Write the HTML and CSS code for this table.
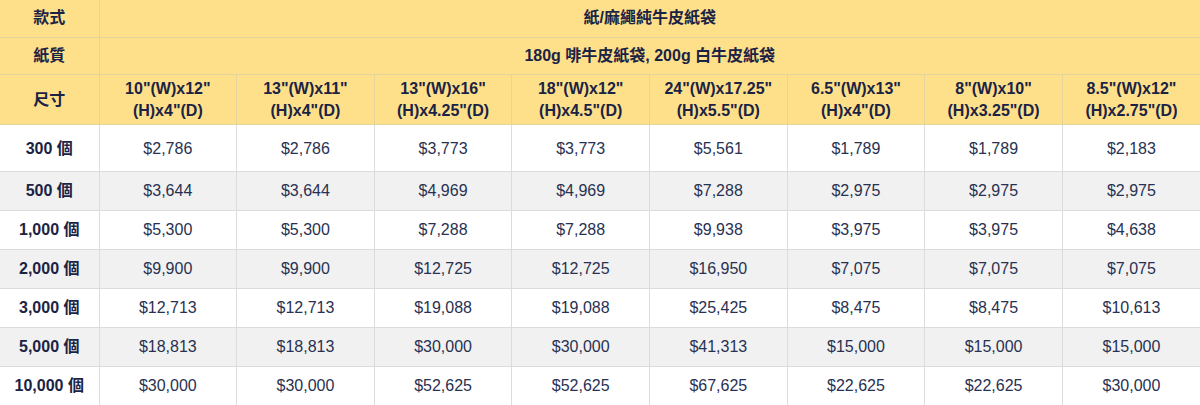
FILE: index.html
```html
<!DOCTYPE html>
<html lang="zh-Hant">
<head>
<meta charset="utf-8">
<link rel="stylesheet" href="styles.css">
</head>
<body>
<table class="price">
  <colgroup>
    <col class="c-label">
    <col span="8" class="c-size">
  </colgroup>
  <thead>
    <tr class="h-row">
      <th>款式</th>
      <th colspan="8">紙/麻繩純牛皮紙袋</th>
    </tr>
    <tr class="h-row">
      <th>紙質</th>
      <th colspan="8">180g 啡牛皮紙袋, 200g 白牛皮紙袋</th>
    </tr>
    <tr class="h-size">
      <th>尺寸</th>
      <th>10"(W)x12"<br>(H)x4"(D)</th>
      <th>13"(W)x11"<br>(H)x4"(D)</th>
      <th>13"(W)x16"<br>(H)x4.25"(D)</th>
      <th>18"(W)x12"<br>(H)x4.5"(D)</th>
      <th>24"(W)x17.25"<br>(H)x5.5"(D)</th>
      <th>6.5"(W)x13"<br>(H)x4"(D)</th>
      <th>8"(W)x10"<br>(H)x3.25"(D)</th>
      <th>8.5"(W)x12"<br>(H)x2.75"(D)</th>
    </tr>
  </thead>
  <tbody>
    <tr class="first">
      <th>300 個</th>
      <td>$2,786</td><td>$2,786</td><td>$3,773</td><td>$3,773</td><td>$5,561</td><td>$1,789</td><td>$1,789</td><td>$2,183</td>
    </tr>
    <tr>
      <th>500 個</th>
      <td>$3,644</td><td>$3,644</td><td>$4,969</td><td>$4,969</td><td>$7,288</td><td>$2,975</td><td>$2,975</td><td>$2,975</td>
    </tr>
    <tr>
      <th>1,000 個</th>
      <td>$5,300</td><td>$5,300</td><td>$7,288</td><td>$7,288</td><td>$9,938</td><td>$3,975</td><td>$3,975</td><td>$4,638</td>
    </tr>
    <tr>
      <th>2,000 個</th>
      <td>$9,900</td><td>$9,900</td><td>$12,725</td><td>$12,725</td><td>$16,950</td><td>$7,075</td><td>$7,075</td><td>$7,075</td>
    </tr>
    <tr>
      <th>3,000 個</th>
      <td>$12,713</td><td>$12,713</td><td>$19,088</td><td>$19,088</td><td>$25,425</td><td>$8,475</td><td>$8,475</td><td>$10,613</td>
    </tr>
    <tr>
      <th>5,000 個</th>
      <td>$18,813</td><td>$18,813</td><td>$30,000</td><td>$30,000</td><td>$41,313</td><td>$15,000</td><td>$15,000</td><td>$15,000</td>
    </tr>
    <tr>
      <th>10,000 個</th>
      <td>$30,000</td><td>$30,000</td><td>$52,625</td><td>$52,625</td><td>$67,625</td><td>$22,625</td><td>$22,625</td><td>$30,000</td>
    </tr>
  </tbody>
</table>
</body>
</html>
```

FILE: styles.css
```css
html, body {
  margin: 0;
  padding: 0;
  background: #ffffff;
}

body {
  font-family: "Liberation Sans", Arial, "Noto Sans CJK TC", sans-serif;
  color: #1f2747;
}

.price {
  width: 1200px;
  table-layout: fixed;
  border-collapse: collapse;
  border-style: hidden;
}

.c-label { width: 99px; }

.price th,
.price td {
  padding: 0;
  text-align: center;
  vertical-align: middle;
  font-size: 16px;
  line-height: 22px;
}

.price thead th {
  background: #fee08b;
  font-weight: 700;
  color: #1b2344;
  border: 1px solid #e3d39c;
}

.h-row { height: 37px; }
.h-size { height: 50px; }
.h-size th { padding-top: 2px; }

.price tbody th,
.price tbody td {
  border: 1px solid #dcdcdc;
}

.price tbody th {
  font-weight: 700;
  color: #1b2344;
}

.price tbody td {
  font-weight: 400;
  color: #283152;
}

.price tbody tr { height: 39px; }
.price tbody tr.first { height: 47px; }
.price tbody tr.first th,
.price tbody tr.first td { padding-top: 3px; }

.price tbody tr:nth-child(even) th,
.price tbody tr:nth-child(even) td {
  background: #f1f1f1;
}
```
